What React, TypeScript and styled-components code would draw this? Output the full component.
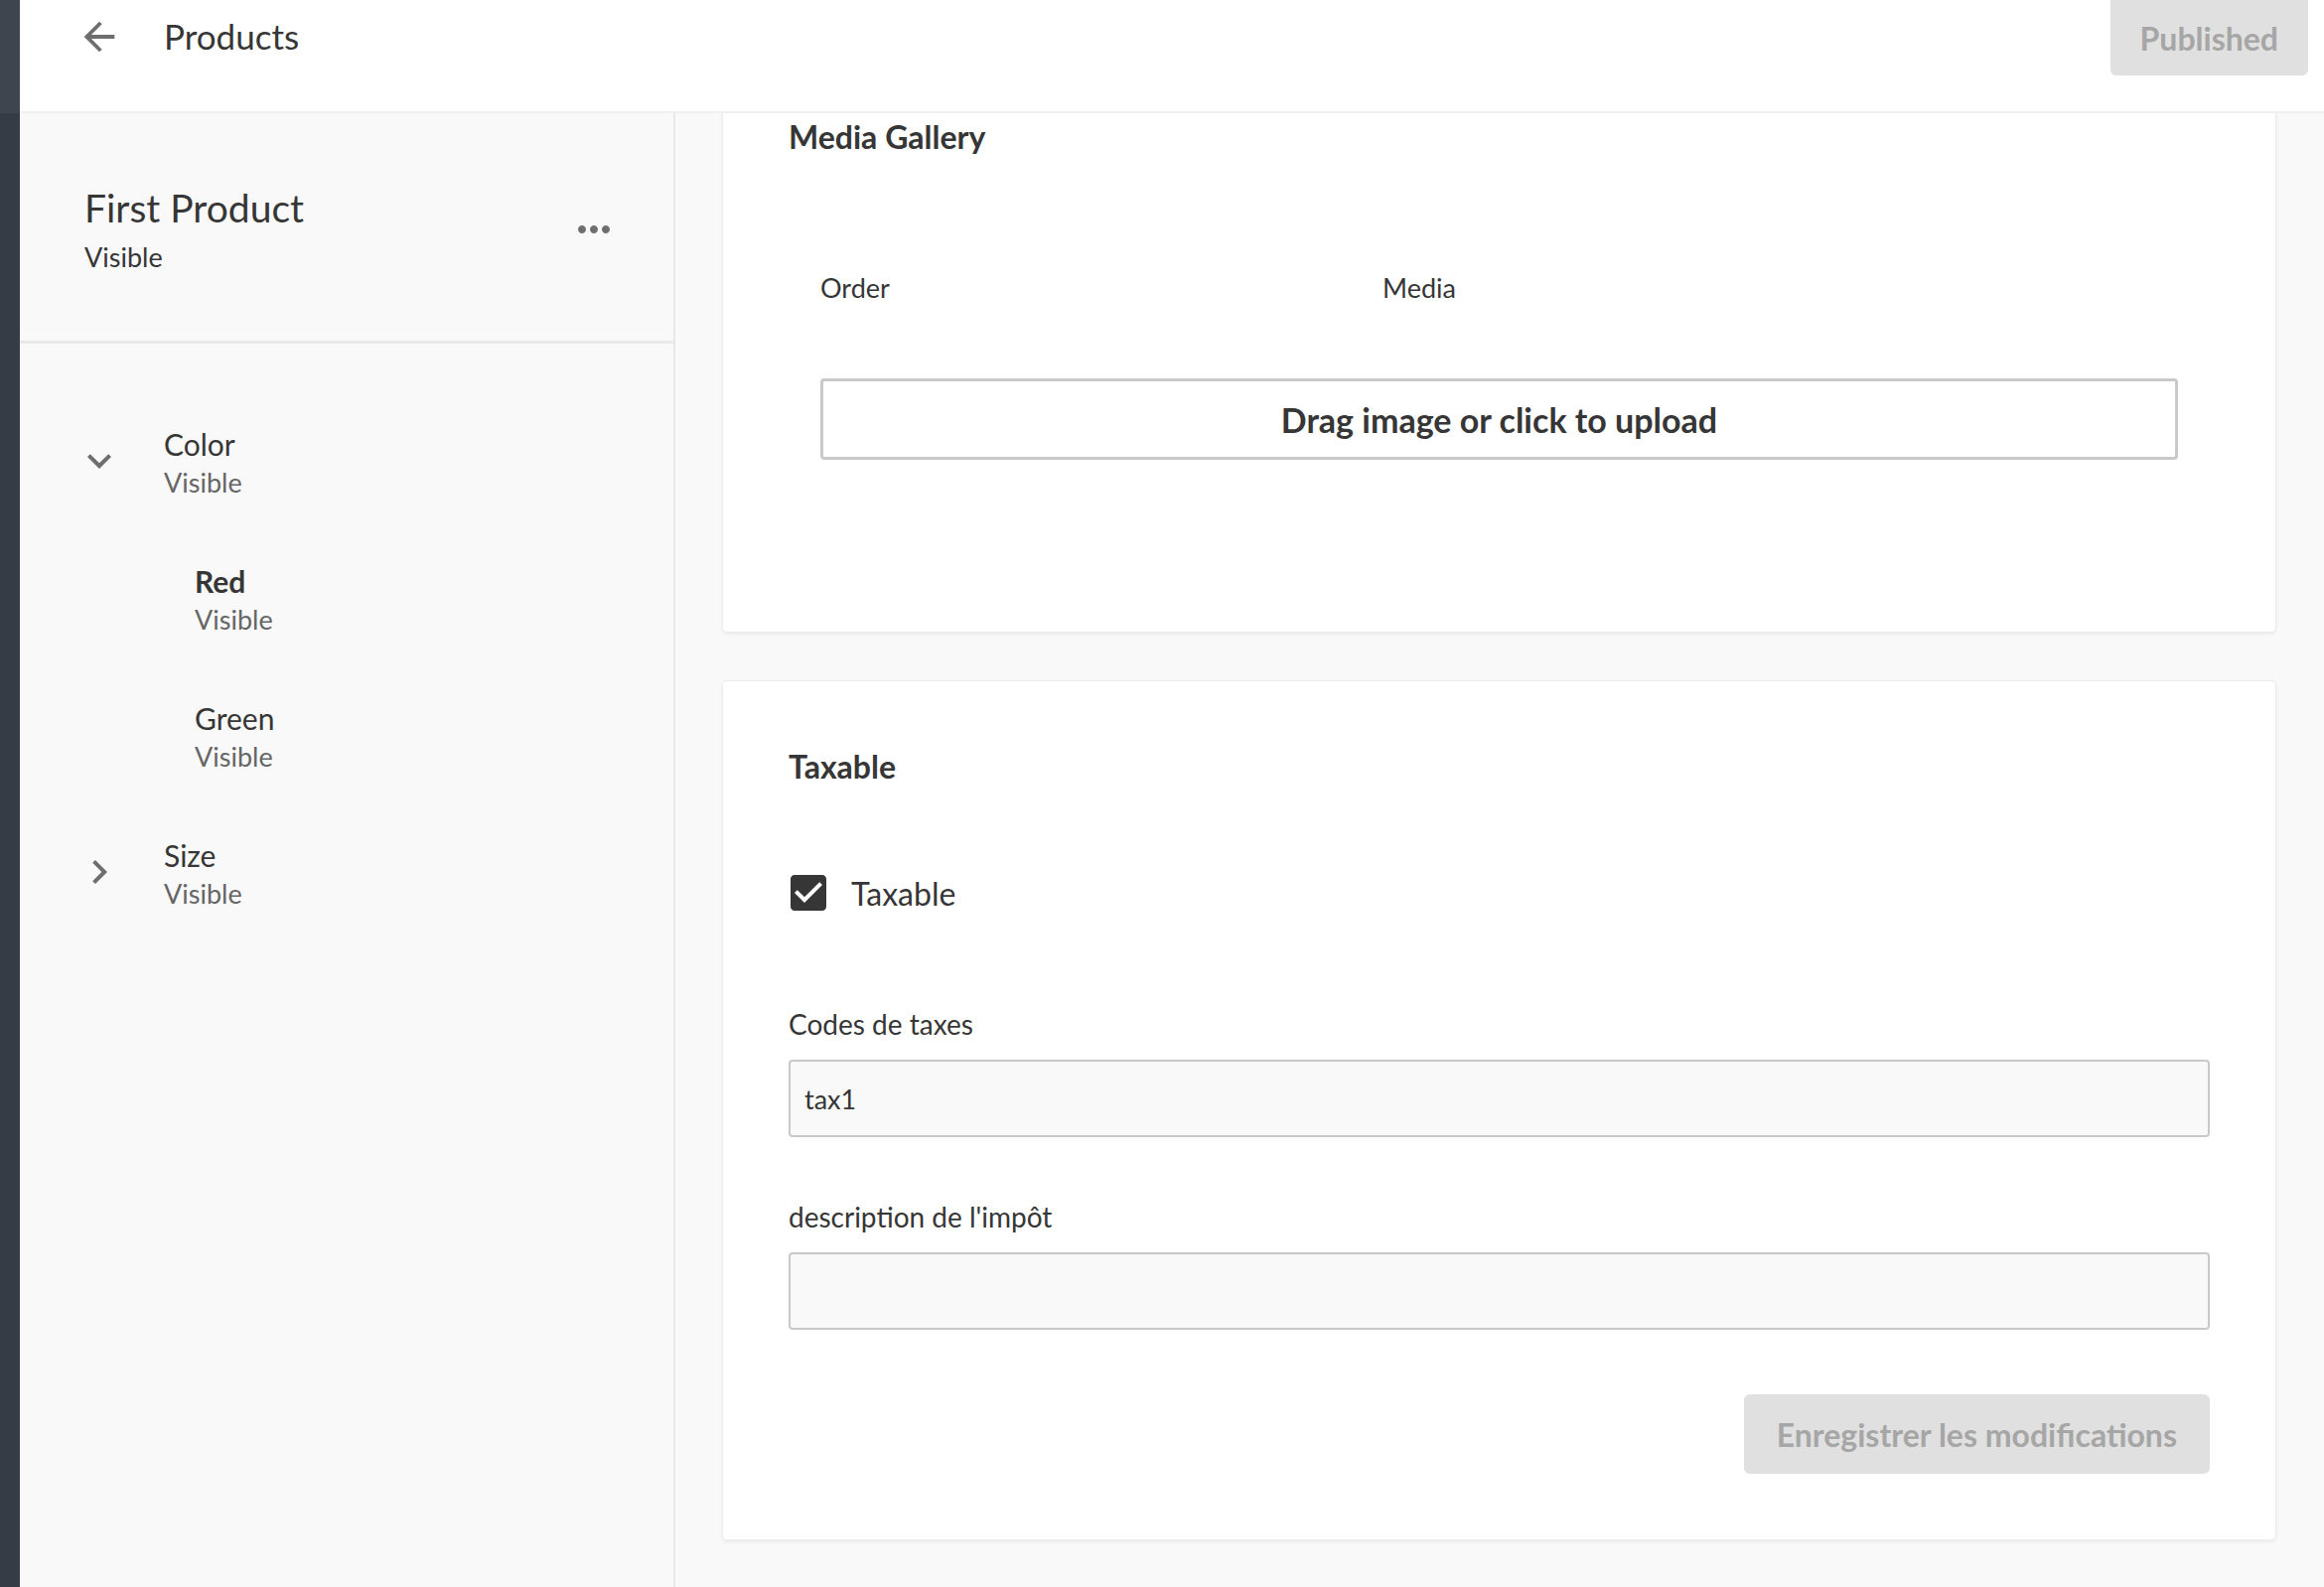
import React, { FC, useLayoutEffect, useRef } from 'react';
import styled, { createGlobalStyle } from 'styled-components';

const color = {
    rail: '#343d45',
    railTop: '#3d464e',
    ink: '#363636',
    muted: '#666666',
    icon: '#6e6e6e',
    line: '#e8e8e8',
    canvas: '#f9f9f9',
    white: '#ffffff',
    disabledBg: '#e0e0e0',
    disabledInk: '#a6a6a6',
    field: '#c9c9c9',
};

const GlobalStyle = createGlobalStyle`
    html, body, #root {
        margin: 0;
        height: 100%;
    }
    body {
        font-family: Lato, 'Noto Sans', sans-serif;
        color: ${color.ink};
        background: ${color.canvas};
        -webkit-font-smoothing: antialiased;
    }
`;

const Shell = styled.div`
    display: grid;
    grid-template-columns: 20px 1fr;
    height: 100vh;
    overflow: hidden;
`;

const Rail = styled.div`
    background: linear-gradient(to bottom, ${color.railTop} 0 114px, ${color.rail} 114px);
`;

const Workspace = styled.div`
    display: flex;
    flex-direction: column;
    min-width: 0;
    height: 100vh;
`;

const TopBar = styled.header`
    box-sizing: border-box;
    height: 114px;
    flex-shrink: 0;
    display: flex;
    align-items: flex-start;
    padding: 0 16px 0 57px;
    background: ${color.white};
    border-bottom: 2px solid #f0f0f0;
`;

const BackButton = styled.button`
    display: flex;
    align-items: center;
    height: 74px;
    padding: 0;
    border: none;
    background: none;
    cursor: pointer;
`;

const TopBarTitle = styled.h1`
    margin: 0 0 0 42px;
    font-size: 35px;
    font-weight: 400;
    line-height: 72px;
    color: ${color.ink};
    flex: 1;
`;

const PublishButton = styled.button`
    height: 76px;
    padding: 0 30px;
    border: none;
    border-radius: 0 0 6px 6px;
    background: ${color.disabledBg};
    color: ${color.disabledInk};
    font-family: inherit;
    font-size: 32px;
    font-weight: 700;
`;

const Body = styled.div`
    flex: 1;
    min-height: 0;
    display: grid;
    grid-template-columns: 660px 1fr;
`;

const Sidebar = styled.aside`
    background: ${color.canvas};
    border-right: 2px solid ${color.line};
    overflow: hidden;
`;

const SidebarHead = styled.div`
    display: flex;
    align-items: center;
    justify-content: space-between;
    padding: 72px 56px 67px 65px;
    border-bottom: 3px solid ${color.line};
`;

const ProductTitle = styled.div`
    font-size: 39px;
    line-height: 46px;
`;

const ProductStatus = styled.div`
    margin-top: 10px;
    font-size: 27px;
    line-height: 34px;
`;

const Tree = styled.div`
    display: flex;
    flex-direction: column;
    gap: 60px;
    padding: 82px 0 0 56px;
`;

const TreeRow = styled.div<{ $depth: number }>`
    display: flex;
    align-items: center;
    gap: 41px;
    padding-left: ${(p) => (p.$depth > 0 ? '120px' : '0')};
`;

const TreeToggle = styled.span`
    display: flex;
    width: 48px;
    height: 48px;
    margin-top: -6px;
`;

const TreeTitle = styled.div<{ $active?: boolean }>`
    font-size: 30px;
    line-height: 38px;
    font-weight: ${(p) => (p.$active ? 700 : 400)};
`;

const TreeStatus = styled.div`
    font-size: 27px;
    line-height: 40px;
    color: ${color.muted};
`;

const Main = styled.main`
    box-sizing: border-box;
    overflow-y: auto;
    scrollbar-width: none;
    display: flex;
    flex-direction: column;
    gap: 50px;
    padding: 48px 49px 48px 48px;
    &::-webkit-scrollbar {
        display: none;
    }
`;

const Card = styled.section`
    flex-shrink: 0;
    padding: 66px;
    background: ${color.white};
    border-radius: 4px;
    box-shadow: 0 0 0 1px #ececec, 0 2px 4px rgba(0, 0, 0, 0.08);
`;

const CardTitle = styled.h2`
    margin: 0;
    font-size: 32px;
    line-height: 40px;
    font-weight: 700;
`;

const MediaTable = styled.div`
    margin-top: 115px;
    padding: 0 32px;
`;

const MediaHead = styled.div`
    display: grid;
    grid-template-columns: 566px 1fr;
    font-size: 27px;
    line-height: 34px;
`;

const UploadBox = styled.button`
    display: flex;
    align-items: center;
    justify-content: center;
    box-sizing: border-box;
    width: 100%;
    height: 82px;
    margin: 74px 0 107px;
    border: 3px solid ${color.field};
    border-radius: 4px;
    background: ${color.white};
    color: ${color.ink};
    font-family: inherit;
    font-size: 34px;
    font-weight: 700;
    cursor: pointer;
`;

const CheckRow = styled.label`
    display: flex;
    align-items: center;
    gap: 19px;
    height: 48px;
    margin: 83px 0 0 -4px;
    font-size: 32px;
`;

const Field = styled.div<{ $gap: number }>`
    margin-top: ${(p) => p.$gap}px;
`;

const FieldLabel = styled.label`
    display: block;
    font-size: 28px;
    line-height: 34px;
`;

const FieldInput = styled.input`
    display: block;
    box-sizing: border-box;
    width: 100%;
    height: 78px;
    margin-top: 19px;
    padding: 0 14px;
    border: 2px solid ${color.field};
    border-radius: 4px;
    background: ${color.canvas};
    color: ${color.ink};
    font-family: inherit;
    font-size: 27px;
    outline: none;
`;

const Actions = styled.div`
    display: flex;
    justify-content: flex-end;
    margin-top: 65px;
`;

const SaveButton = styled.button`
    height: 80px;
    padding: 0 33px;
    border: none;
    border-radius: 6px;
    background: ${color.disabledBg};
    color: ${color.disabledInk};
    font-family: inherit;
    font-size: 32px;
    font-weight: 700;
`;

const Icon: FC<{ d: string; size: number; fill?: string }> = ({ d, size, fill = color.icon }) => (
    <svg width={size} height={size} viewBox="0 0 24 24" fill={fill} aria-hidden="true">
        <path d={d} />
    </svg>
);

const ARROW_BACK = 'M20 11H7.83l5.59-5.59L12 4l-8 8 8 8 1.41-1.41L7.83 13H20v-2z';
const MORE_HORIZ =
    'M6 10c-1.1 0-2 .9-2 2s.9 2 2 2 2-.9 2-2-.9-2-2-2zm12 0c-1.1 0-2 .9-2 2s.9 2 2 2 2-.9 2-2-.9-2-2-2zm-6 0c-1.1 0-2 .9-2 2s.9 2 2 2 2-.9 2-2-.9-2-2-2z';
const EXPAND_MORE = 'M16.59 8.59L12 13.17 7.41 8.59 6 10l6 6 6-6z';
const CHEVRON_RIGHT = 'M10 6L8.59 7.41 13.17 12l-4.58 4.59L10 18l6-6z';
const CHECK_BOX =
    'M19 3H5c-1.11 0-2 .9-2 2v14c0 1.1.89 2 2 2h14c1.11 0 2-.9 2-2V5c0-1.1-.89-2-2-2zm-9 14l-5-5 1.41-1.41L10 14.17l7.59-7.59L19 8l-9 9z';

type Option = { name: string; status: string; depth: number; open?: boolean; active?: boolean };

const options: Option[] = [
    { name: 'Color', status: 'Visible', depth: 0, open: true },
    { name: 'Red', status: 'Visible', depth: 1, active: true },
    { name: 'Green', status: 'Visible', depth: 1 },
    { name: 'Size', status: 'Visible', depth: 0, open: false },
];

const App: FC = () => {
    const mainRef = useRef<HTMLElement>(null);

    // land on the tax section, the gallery sits above it
    useLayoutEffect(() => {
        const el = mainRef.current;
        if (el) el.scrollTop = el.scrollHeight;
    }, []);

    return (
        <>
            <GlobalStyle />
            <Shell>
                <Rail />
                <Workspace>
                    <TopBar>
                        <BackButton aria-label="Back">
                            <Icon d={ARROW_BACK} size={46} />
                        </BackButton>
                        <TopBarTitle>Products</TopBarTitle>
                        <PublishButton disabled>Published</PublishButton>
                    </TopBar>

                    <Body>
                        <Sidebar>
                            <SidebarHead>
                                <div>
                                    <ProductTitle>First Product</ProductTitle>
                                    <ProductStatus>Visible</ProductStatus>
                                </div>
                                <Icon d={MORE_HORIZ} size={48} />
                            </SidebarHead>
                            <Tree>
                                {options.map((o) => (
                                    <TreeRow key={o.name} $depth={o.depth}>
                                        {o.depth === 0 && (
                                            <TreeToggle>
                                                <Icon d={o.open ? EXPAND_MORE : CHEVRON_RIGHT} size={48} />
                                            </TreeToggle>
                                        )}
                                        <div>
                                            <TreeTitle $active={o.active}>{o.name}</TreeTitle>
                                            <TreeStatus>{o.status}</TreeStatus>
                                        </div>
                                    </TreeRow>
                                ))}
                            </Tree>
                        </Sidebar>

                        <Main ref={mainRef}>
                            <Card>
                                <CardTitle>Media Gallery</CardTitle>
                                <MediaTable>
                                    <MediaHead>
                                        <span>Order</span>
                                        <span>Media</span>
                                    </MediaHead>
                                    <UploadBox type="button">Drag image or click to upload</UploadBox>
                                </MediaTable>
                            </Card>

                            <Card>
                                <CardTitle>Taxable</CardTitle>
                                <CheckRow>
                                    <Icon d={CHECK_BOX} size={48} fill={color.ink} />
                                    Taxable
                                </CheckRow>
                                <Field $gap={91}>
                                    <FieldLabel htmlFor="tax-codes">Codes de taxes</FieldLabel>
                                    <FieldInput id="tax-codes" value="tax1" readOnly />
                                </Field>
                                <Field $gap={63}>
                                    <FieldLabel htmlFor="tax-description">description de l'impôt</FieldLabel>
                                    <FieldInput id="tax-description" value="" readOnly />
                                </Field>
                                <Actions>
                                    <SaveButton disabled>Enregistrer les modifications</SaveButton>
                                </Actions>
                            </Card>
                        </Main>
                    </Body>
                </Workspace>
            </Shell>
        </>
    );
};

export default App;
